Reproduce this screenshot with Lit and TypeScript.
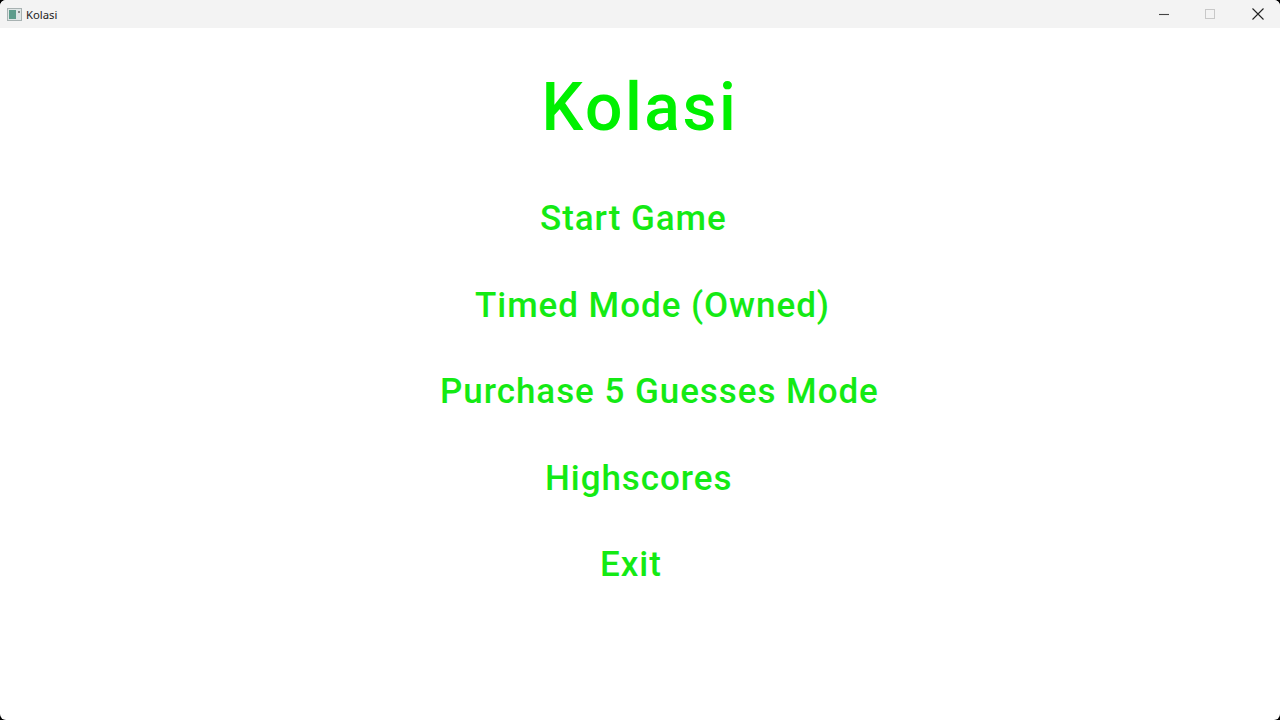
import { LitElement, html, css } from "lit";
import { customElement } from "lit/decorators.js";

const items = [
  { t: "Start Game", x: 540 },
  { t: "Timed Mode (Owned)", x: 475 },
  { t: "Purchase 5 Guesses Mode", x: 440 },
  { t: "Highscores", x: 545 },
  { t: "Exit", x: 600 },
];

@customElement("app-root")
export class AppRoot extends LitElement {
  static styles = css`
    :host { display: block; width: 1280px; height: 720px; background: #000; overflow: hidden; }
    .win { width: 1280px; height: 720px; background: #fff; border-radius: 6px; overflow: hidden; display: flex; flex-direction: column; font-family: "Roboto", "Liberation Sans", sans-serif; }
    .bar { height: 28px; flex: none; background: #f3f3f3; display: flex; align-items: center; padding-left: 7px; font-size: 11.3px; color: #222; font-family: "Noto Sans", "Liberation Sans", sans-serif; }
    .app-icon { width: 15px; height: 13px; margin-right: 4px; flex: none; }
    .title { flex: 1; }
    .ctrl { display: flex; align-items: center; }
    .ctrl svg { width: 12px; height: 12px; display: block; }
    .c1 { margin-right: 34px; }
    .c2 { margin-right: 36px; }
    .c3 { margin-right: 16px; }
    .main { flex: 1; display: flex; flex-direction: column; align-items: stretch; }
    h1 { margin: 40px 0 0 0; font-weight: 500; font-size: 66px; line-height: 80px; height: 80px; color: #00f000; text-align: center; letter-spacing: 2.6px; }
    .menu { display: flex; flex-direction: column; gap: 46.5px; margin-top: 51px; }
    .item { font-size: 35px; line-height: 40px; font-weight: 500; color: #14ea14; white-space: nowrap; letter-spacing: 0.95px; }
  `;
  render() {
    return html`<div class="win">
      <div class="bar">
        <svg class="app-icon" viewBox="0 0 15 13">
          <rect x=".5" y=".5" width="14" height="12" fill="#dfe6e6" stroke="#a8b2b2"/>
          <rect x="2" y="2" width="7" height="9" fill="#5d9c8c"/>
          <rect x="11" y="3" width="2" height="2" fill="#888"/>
        </svg>
        <span class="title">Kolasi</span>
        <div class="ctrl">
          <svg class="c1" viewBox="0 0 12 12"><path d="M1 6.5h10" stroke="#444" stroke-width="1.1"/></svg>
          <svg class="c2" viewBox="0 0 12 12"><rect x="1.5" y="1.5" width="9" height="9" fill="none" stroke="#c8c8c8"/></svg>
          <svg class="c3" viewBox="0 0 12 12"><path d="M.5.5l11 11M11.5.5l-11 11" stroke="#222" stroke-width="1.1"/></svg>
        </div>
      </div>
      <div class="main">
        <h1>Kolasi</h1>
        <div class="menu">
          ${items.map((i) => html`<div class="item" style="padding-left:${i.x}px">${i.t}</div>`)}
        </div>
      </div>
    </div>`;
  }
}
